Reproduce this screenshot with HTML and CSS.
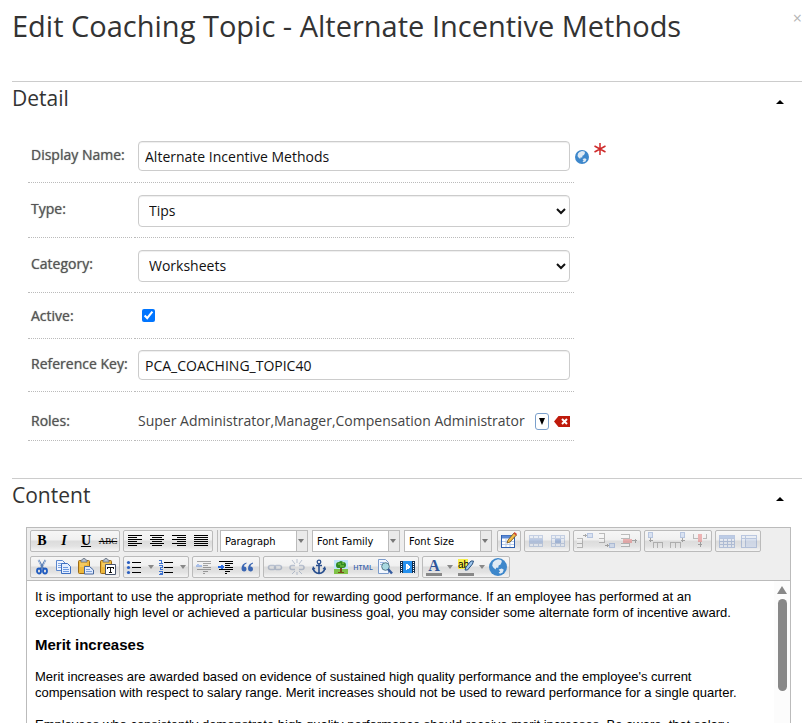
FILE: index.html
```html
<!DOCTYPE html>
<html lang="en">
<head>
<meta charset="utf-8">
<title>Edit Coaching Topic</title>
<link rel="stylesheet" href="styles.css">
</head>
<body>
<svg class="defs" aria-hidden="true">
  <symbol id="globe" viewBox="0 0 14 14"><circle cx="7" cy="7" r="7" fill="#3d87cb"/><path d="M4.500 2 7 1l2.500.5.5 1.500L9 5 7.500 5.800 7.200 7.500 5.500 7.500 5.200 9 3.500 7.500 2.500 6l.5-2.500zM7.500 9l2.500-.8 1.500 1-1 2.300-2 .8-1-1 1.200-.8z" fill="#dfeaf4"/></symbol>
  <symbol id="clip" viewBox="0 0 22 20"><rect x="3.500" y="3.500" width="11" height="13" rx="1" fill="#eeb83c" stroke="#9b6a16"/><path d="M6 5V3h1.500l.5-1.500h2l.5 1.500H12v2z" fill="#b9c3d2" stroke="#5f6875" stroke-width=".7"/><path d="M5 7h7M5 9h4" stroke="#f9da83"/></symbol>
</svg>
<main class="page">
  <header class="head">
    <h1>Edit Coaching Topic - Alternate Incentive Methods</h1>
    <button class="close" type="button" aria-label="Close">×</button>
  </header>

  <section class="panel">
    <div class="panel-head"><h2>Detail</h2><button class="fold" type="button" aria-label="Collapse detail"></button></div>
    <form class="form">
      <div class="row r-input">
        <label for="name">Display Name:</label>
        <div class="field"><input class="box" id="name" type="text" value="Alternate Incentive Methods">
          <svg class="globe" width="14" height="14"><use href="#globe"/></svg>
          <svg class="star" width="12" height="14" viewBox="0 0 12 14"><path d="M6 1v12M.5 4l11 6M11.500 4l-11 6" stroke="#cf2b2b" stroke-width="1.500"/></svg></div>
      </div>
      <div class="row r-select">
        <label for="type">Type:</label>
        <div class="field"><select class="box" id="type"><option>Tips</option></select></div>
      </div>
      <div class="row r-select">
        <label for="cat">Category:</label>
        <div class="field"><select class="box" id="cat"><option>Worksheets</option></select></div>
      </div>
      <div class="row r-check">
        <label for="active">Active:</label>
        <div class="field"><input class="check" id="active" type="checkbox" checked></div>
      </div>
      <div class="row r-input">
        <label for="key">Reference Key:</label>
        <div class="field"><input class="box" id="key" type="text" value="PCA_COACHING_TOPIC40"></div>
      </div>
      <div class="row r-roles">
        <label for="pick">Roles:</label>
        <div class="field roles"><span>Super Administrator,Manager,Compensation Administrator</span>
          <button class="pick" id="pick" type="button" aria-label="Choose roles"><svg width="6" height="7" viewBox="0 0 6 7"><path d="M0 0h6L3 7z"/></svg></button>
          <button class="clear" type="button" aria-label="Clear roles"><svg width="16" height="11" viewBox="0 0 16 11"><path d="M0 5.500 4.500 0H16v11H4.500z" fill="#bf1a0b"/><path d="m8 3 5 5m0-5-5 5" stroke="#fff" stroke-width="2"/></svg></button></div>
      </div>
    </form>
  </section>

  <section class="panel content">
    <div class="panel-head"><h2>Content</h2><button class="fold" type="button" aria-label="Collapse content"></button></div>
    <div class="editor">
      <div class="toolbar">
        <div class="tools">
          <div class="group">
            <button type="button" class="t-bold">B</button><button type="button" class="t-bold t-italic">I</button><button type="button" class="t-bold t-under">U</button><button type="button" class="t-strike">ABC</button>
          </div>
          <div class="group">
            <button type="button" aria-label="Align left"><svg class="px" viewBox="0 0 22 20"><path d="M4 4.500h14M4 6.500h9M4 8.500h14M4 10.500h9M4 12.500h14M4 14.500h9" stroke="#000"/></svg></button>
            <button type="button" aria-label="Align center"><svg class="px" viewBox="0 0 22 20"><path d="M4 4.500h14M6 6.500h10M4 8.500h14M6 10.500h10M4 12.500h14M6 14.500h10" stroke="#000"/></svg></button>
            <button type="button" aria-label="Align right"><svg class="px" viewBox="0 0 22 20"><path d="M4 4.500h14M9 6.500h9M4 8.500h14M9 10.500h9M4 12.500h14M9 14.500h9" stroke="#000"/></svg></button>
            <button type="button" aria-label="Justify"><svg class="px" viewBox="0 0 22 20"><path d="M4 4.500h14M4 6.500h14M4 8.500h14M4 10.500h14M4 12.500h14M4 14.500h14" stroke="#000"/></svg></button>
          </div>
          <div class="lists">
            <span class="drop"><select aria-label="Format"><option>Paragraph</option></select></span>
            <span class="drop"><select aria-label="Font family"><option>Font Family</option></select></span>
            <span class="drop"><select aria-label="Font size"><option>Font Size</option></select></span>
          </div>
          <div class="group">
            <button type="button" aria-label="Table"><svg viewBox="0 0 22 20"><rect x="3.500" y="4.500" width="13" height="12" fill="#fff" stroke="#2f5fae"/><path d="M4 6h12" stroke="#5b8ad6" stroke-width="3"/><path d="M4 10.500h12M4 13.500h12M8 8v8M12 8v8" stroke="#b7cbe8"/><path d="m9 12 1-3 6-7 2.500 2L12 11z" fill="#f1bd4a" stroke="#6d4b16" stroke-width=".8"/><path d="m15.500 2.500 1-1.500 2.500 2-1 1.500z" fill="#d34a34"/></svg></button>
          </div>
          <div class="group off">
            <button type="button" disabled aria-label="Row properties"><svg class="px" viewBox="0 0 22 20"><path d="M4.500 4.500h13v11h-13zM4 7.500h14M4 12.500h14M8.500 4v11M13.500 4v11" fill="#dce7fa" stroke="#6f8fc6"/><path d="M4 8h14v4H4z" fill="#5b86d0"/></svg></button>
            <button type="button" disabled aria-label="Cell properties"><svg class="px" viewBox="0 0 22 20"><path d="M4.500 4.500h13v11h-13zM4 7.500h14M4 12.500h14M8.500 4v11M13.500 4v11" fill="#dce7fa" stroke="#6f8fc6"/><path d="M8 8h6v4H8z" fill="#2f65c0"/></svg></button>
          </div>
          <div class="group off">
            <button type="button" disabled aria-label="Row before"><svg class="px" viewBox="0 0 22 20"><path d="M3 7.500h5.500v9H3M3 12h6" fill="#fff" stroke="#555"/><path d="M13.500 2.500h5v4h-5z" fill="#a9c2ee" stroke="#4a73be"/><path d="M9 4.500h4M11 3v3" stroke="#222"/></svg></button>
            <button type="button" disabled aria-label="Row after"><svg class="px" viewBox="0 0 22 20"><path d="M3 2.500h5.500v9H3M3 7h6" fill="#fff" stroke="#555"/><path d="M13.500 12.500h5v4h-5z" fill="#a9c2ee" stroke="#4a73be"/><path d="M9 14.500h4M11 13v3" stroke="#222"/></svg></button>
            <button type="button" disabled aria-label="Delete row"><svg class="px" viewBox="0 0 22 20"><path d="M3 3.500h8.500v4H3M3 12.500h8.500v3H3" fill="#fff" stroke="#555"/><path d="M5 8h9v4H5z" fill="#e24040"/><path d="M14 9.500h5M17 8v4" stroke="#222"/></svg></button>
          </div>
          <div class="group off">
            <button type="button" disabled aria-label="Column before"><svg class="px" viewBox="0 0 22 20"><path d="M8 17v-5.500h9.500V17M12.500 12v5" fill="none" stroke="#555"/><path d="M3.500 1.500h4v5h-4z" fill="#a9c2ee" stroke="#4a73be"/><path d="M5.500 7v4M4 9.500h4" stroke="#222"/></svg></button>
            <button type="button" disabled aria-label="Column after"><svg class="px" viewBox="0 0 22 20"><path d="M3.500 17v-5.500H13V17M8.500 12v5" fill="none" stroke="#555"/><path d="M13.500 1.500h4v5h-4z" fill="#a9c2ee" stroke="#4a73be"/><path d="M15.500 7v4M14 9.500h4" stroke="#222"/></svg></button>
            <button type="button" disabled aria-label="Delete column"><svg class="px" viewBox="0 0 22 20"><path d="M4.500 3v4h4M17.500 3v4h-4" fill="none" stroke="#555"/><path d="M9 3h4v8H9z" fill="#e24040"/><path d="M11.500 11v5M9 13.500h4" stroke="#222"/></svg></button>
          </div>
          <div class="group off">
            <button type="button" disabled aria-label="Split cells"><svg class="px" viewBox="0 0 22 20"><path d="M3.500 4.500h15v12h-15zM3 7.500h16M3 10.500h16M3 13.500h16M7.500 7v10M11.500 7v10M15.500 7v10" fill="#dce7fa" stroke="#5278bd"/><path d="M4 5h14v2H4z" fill="#5b86d0"/></svg></button>
            <button type="button" disabled aria-label="Merge cells"><svg class="px" viewBox="0 0 22 20"><path d="M3.500 4.500h15v12h-15zM3 7.500h16M7.500 4v12" fill="#dce7fa" stroke="#5278bd"/><path d="M8 8h10v8H8z" fill="#b4caf2"/></svg></button>
          </div>
        </div>

        <div class="tools">
          <div class="group">
            <button type="button" aria-label="Cut"><svg viewBox="0 0 22 20"><path d="m7.500 3 5 9M14.500 3l-5 9" stroke="#5b7fb5" stroke-width="1.800"/><path d="m7.500 3 2 5M14.500 3l-2 5" stroke="#b9cbe4"/><ellipse cx="8" cy="14" rx="2" ry="2.500" fill="none" stroke="#1f5bc0" stroke-width="1.800"/><ellipse cx="14" cy="14" rx="2" ry="2.500" fill="none" stroke="#1f5bc0" stroke-width="1.800"/></svg></button>
            <button type="button" aria-label="Copy"><svg viewBox="0 0 22 20"><path d="M3.500 3.500h6l3 3v7h-9z" fill="#eef4ff" stroke="#5a86cd"/><path d="M5 6.500h4M5 8.500h4M5 10.500h3" stroke="#80a6e2"/><path d="M8.500 6.500h6l3 3v7h-9z" fill="#e2edff" stroke="#3c6ec0"/><path d="M10 10.500h5M10 12.500h6M10 14.500h6" stroke="#6d99df"/></svg></button>
            <button type="button" aria-label="Paste"><svg viewBox="0 0 22 20"><use href="#clip"/><path d="M9.500 9.500h5l4 3.500v4h-9z" fill="#dfeaff" stroke="#47679c"/><path d="M11 12.500h4M11 14.500h6" stroke="#7ea1d8"/></svg></button>
            <button type="button" aria-label="Paste as text"><svg viewBox="0 0 22 20"><use href="#clip"/><path d="M8.500 7.500h10v10h-10z" fill="#fff" stroke="#47536b"/><path d="M10 10.500h7M13.500 10v6M12 15.500h3M10.500 10v2M16.500 10v2" stroke="#111"/></svg></button>
          </div>
          <div class="group">
            <button type="button" aria-label="Bulleted list"><svg viewBox="0 0 22 20"><path d="M8 5.500h9M8 10.500h9M8 15.500h9" stroke="#000"/><g fill="#2b5fc0"><circle cx="4.500" cy="5.500" r="1.600"/><circle cx="4.500" cy="10.500" r="1.600"/><circle cx="4.500" cy="15.500" r="1.600"/></g></svg></button><button type="button" class="more" aria-label="Bullet styles"></button>
            <button type="button" aria-label="Numbered list"><svg class="px" viewBox="0 0 22 20"><path d="M8 5.500h9M8 10.500h9M8 15.500h9" stroke="#000"/><path d="M3 3.500h2V7M3 6.500h4M3 8.500h3v2H4v2h3M3 14.500h3v3H3M4 16.500h2" fill="none" stroke="#3d72d0"/></svg></button><button type="button" class="more" aria-label="Number styles"></button>
          </div>
          <div class="group">
            <button type="button" disabled class="off" aria-label="Outdent"><svg class="px" viewBox="0 0 22 20"><path d="M4 4.500h14M10 6.500h8M10 8.500h5M10 10.500h8M4 12.500h14M10 14.500h5M10 16.500h2" stroke="#111"/><path d="M3 8.500h6M5 7v3" stroke="#2a6be0" stroke-width="2"/></svg></button>
            <button type="button" aria-label="Indent"><svg class="px" viewBox="0 0 22 20"><path d="M4 4.500h14M10 6.500h8M10 8.500h5M10 10.500h8M4 12.500h14M10 14.500h5M10 16.500h2" stroke="#000"/><path d="M3 9.500h6M7 7.500v4" stroke="#2a6be0" stroke-width="2"/></svg></button>
            <button type="button" aria-label="Quote"><svg viewBox="0 0 22 20"><path d="M9.500 5.500C6 6.500 4.500 8.500 4.500 12a2.500 2.500 0 1 0 2.300-2.600Q7 7.500 9.500 6.500zM16 5.500c-3.500 1-5 3-5 6.500a2.500 2.500 0 1 0 2.300-2.600q.2-1.900 2.700-2.900z" fill="#3a66b3"/></svg></button>
          </div>
          <div class="group">
            <button type="button" disabled class="off" aria-label="Link"><svg viewBox="0 0 22 20"><rect x="4.500" y="8.500" width="7" height="4" rx="2" fill="none" stroke="#526a94" stroke-width="1.500"/><rect x="10.500" y="8.500" width="7" height="4" rx="2" fill="none" stroke="#526a94" stroke-width="1.500"/></svg></button>
            <button type="button" disabled class="off" aria-label="Unlink"><svg viewBox="0 0 22 20"><path d="M9 8.500H6a2 2 0 0 0 0 4h3M13 8.500h3a2 2 0 0 1 0 4h-3" fill="none" stroke="#526a94" stroke-width="1.500"/><path d="m6 3 3 4m2-5v4m5-3-3 4M6 17l3-3m2 1v3m5-1-3-3" stroke="#526a94"/></svg></button>
            <button type="button" aria-label="Anchor"><svg viewBox="0 0 22 20"><circle cx="11" cy="5" r="1.800" fill="none" stroke="#294f8f" stroke-width="1.300"/><path d="M11 7v9M8 8.500h6M5 11q1 5 6 5.500 5-.5 6-5.500" fill="none" stroke="#294f8f" stroke-width="1.600"/><path d="m4 13 1-4 2.500 3zM18 13l-1-4-2.500 3z" fill="#294f8f"/></svg></button>
            <button type="button" aria-label="Image"><svg viewBox="0 0 22 20"><path d="M4 3h14v10H4z" fill="#bfe3fa"/><path d="M4 12h14v5H4z" fill="#7fc247"/><path d="M10 10h2v5h2v1H8v-1h2z" fill="#7a4b1d"/><path d="M6 8q0-3 3-3 2-2 4 0 3 0 3 3 0 3-3 3H8Q6 11 6 8z" fill="#2f8a22"/><path d="M8 7h3M12 6h2M10 9h4" stroke="#8bd04d"/></svg></button>
            <button type="button" class="t-html">HTML</button>
            <button type="button" aria-label="Preview"><svg viewBox="0 0 22 20"><path d="M4.500 2.500h7l3 3v11h-10z" fill="#f2f7ff" stroke="#7b9bcb"/><path d="M6 5.500h4M6 7.500h3" stroke="#9bb8e5"/><circle cx="11.500" cy="9.500" r="3.800" fill="#a8d9e2" stroke="#547887"/><path d="m14 12 4 4.500" stroke="#355ca0" stroke-width="2.500"/></svg></button>
            <button type="button" aria-label="Media"><svg class="px" viewBox="0 0 22 20"><path d="M4 4h15v12H4z" fill="#15304f"/><path d="M7 4h9v12H7z" fill="#2590ee"/><path d="M5.500 5v11M17.500 5v11" stroke="#fff" stroke-dasharray="1 1"/><path d="m10 7 4 3-4 3z" fill="#cfe8ff" stroke="#fff"/></svg></button>
          </div>
          <div class="group">
            <button type="button" class="t-color"><span>A</span></button><button type="button" class="more" aria-label="Text colours"></button>
            <button type="button" class="t-mark"><span>ab</span><svg viewBox="0 0 22 20"><path d="m10 13 1-3 5-6h2.500l-1 3-5 6z" fill="#9ec7ef" stroke="#27507f"/></svg></button><button type="button" class="more" aria-label="Highlight colours"></button>
            <button type="button" aria-label="Translate"><svg viewBox="0 0 22 20"><use href="#globe" x="2" y="1" width="18" height="18"/></svg></button>
          </div>
        </div>
      </div>
      <div class="doc">
        <div class="text">
          <p>It is important to use the appropriate method for rewarding good performance. If an employee has performed at an exceptionally high level or achieved a particular business goal, you may consider some alternate form of incentive award.</p>
          <h3>Merit increases</h3>
          <p>Merit increases are awarded based on evidence of sustained high quality performance and the employee's current compensation with respect to salary range. Merit increases should not be used to reward performance for a single quarter.</p>
          <p>Employees who consistently demonstrate high quality performance should receive merit increases. Be aware, that salary</p>
        </div>
        <div class="scroll" aria-hidden="true"><i class="up"></i><i class="thumb"></i></div>
      </div>
    </div>
  </section>
</main>
</body>
</html>
```
FILE: styles.css
```css
* { box-sizing: border-box; }
body { margin: 0; background: #fff; color: #333; font-family: "Open Sans", sans-serif; font-size: 14px; }
button { padding: 0; border: 0; background: none; font: inherit; }
h1, h2, h3, p { margin: 0; }
.defs { display: none; }

.page { display: flex; flex-direction: column; height: 100vh; overflow: hidden; padding: 0 3px 0 12px; }
.head { display: flex; justify-content: space-between; align-items: flex-start; padding: 6px 0 35px; }
h1 { font-size: 29px; line-height: 40px; font-weight: 400; }
.close { color: #b5b5b5; font-size: 16px; line-height: 24px; }

.panel { border-top: 1px solid #ccc; }
.panel-head { display: flex; justify-content: space-between; align-items: center; padding-right: 18px; margin-bottom: 16px; }
h2 { font-size: 21px; line-height: 32px; font-weight: 400; }
.fold { margin-top: 8px; border: 4px solid transparent; border-top: 0; border-bottom-color: #000; }

.form { max-width: 546px; margin: 0 0 37px 16px; }
.row { display: grid; grid-template-columns: 104px minmax(0, 1fr); gap: 2px; }
.row > * { display: flex; align-items: center; border-bottom: 1px dotted #bbb; }
.row label { padding: 0 0 4px 3px; color: #555; text-shadow: 0 0 1px #777; white-space: nowrap; }
.field { gap: 5px; padding: 0 4px; }
.r-input { height: 53px; }
.r-select { height: 55px; }
.r-check { height: 46px; }
.r-roles { height: 49px; }
.r-check label { padding-bottom: 0; }
.r-select .field { padding-top: 2px; }
.r-roles label, .r-roles .field { padding-top: 8px; padding-bottom: 0; }
.box { flex: 0 0 100%; min-width: 0; height: 30px; padding: 0 6px; border: 1px solid #ccc; border-radius: 4px; background: #fff; color: #111; font: inherit; box-shadow: inset 0 1px 1px #eee; }
select.box { height: 32px; padding: 0 6px 2px; }
.globe, .star { flex: none; }
.globe { margin-top: 2px; }
.star { margin-bottom: 14px; }
.check { width: 13px; height: 13px; margin: 0 4px; }
.roles { color: #444; white-space: nowrap; }
.roles span { flex: 1; }
.pick { display: flex; align-items: center; justify-content: center; width: 14px; height: 17px; margin-top: 2px; border: 1px solid #7ba0cc; border-radius: 3px; }
.clear { display: flex; margin-top: 2px; }

.content { display: flex; flex-direction: column; flex: 1; min-height: 0; }
.editor { display: flex; flex-direction: column; flex: 1; min-height: 0; margin: 0 11px 0 14px; border: 1px solid #bbb; border-bottom: 0; }
.toolbar { display: flex; flex-direction: column; gap: 4px; padding: 2px 3px; background: #eee; border-bottom: 1px solid #bbb; }
.tools { display: flex; gap: 3px; }
.group { display: flex; height: 22px; border: 1px solid #bbb; border-radius: 2px; background: linear-gradient(#f6f6f6, #f0f0f0 45%, #dcdcdc 50%, #e2e2e2 75%, #f4f4f4); }
.group button { display: flex; align-items: center; justify-content: center; width: 22px; height: 20px; color: #000; }
.group svg { display: block; width: 22px; height: 20px; }
.px { shape-rendering: crispEdges; }
.group.off svg, .group .off svg { opacity: .35; }
.group .more { width: 10px; }
.more::after { content: ""; border: 3px solid transparent; border-top: 4px solid #888; border-bottom: 0; }
.group .t-bold { font: bold 14px "Liberation Serif", serif; }
.group .t-italic { font-style: italic; }
.group .t-under { text-decoration: underline; }
.group .t-strike { font: 9px "Liberation Serif", serif; text-decoration: line-through; }
.group .t-html { font: 600 7px "Open Sans", sans-serif; color: #3a63ad; }
.t-color span { width: 16px; height: 17px; border-bottom: 3px solid #888; font: bold 16px/14px "Liberation Serif", serif; color: #2f559a; }
.group .t-mark { position: relative; }
.t-mark span { width: 16px; height: 17px; border-bottom: 3px solid #888; font: 10px/11px "Liberation Sans", sans-serif; text-align: left; background: linear-gradient(90deg, #f7f04a 10px, transparent 10px) 0 0 / 100% 10px no-repeat; }
.t-mark svg { position: absolute; inset: 0; }

.lists { display: flex; gap: 4px; margin-left: 1px; padding: 0 2px; border-left: 1px solid #bbb; }
.drop { position: relative; display: flex; width: 88px; height: 22px; border: 1px solid #bbb; background: linear-gradient(90deg, #fff 75px, #bbb 75px, #bbb 76px, #eaeaea 76px); }
.drop select { width: 100%; padding: 0 0 0 4px; border: 0; appearance: none; background: none; color: #000; font: 11px "DejaVu Sans Condensed", sans-serif; }
.drop::after { content: ""; position: absolute; right: 3px; top: 8px; border: 3px solid transparent; border-top: 4px solid #777; border-bottom: 0; }

.doc { display: flex; flex: 1; min-height: 0; overflow: hidden; background: #fff; }
.text { flex: 1; padding: 8px 20px 0 8px; color: #000; font: 13px/16px "Liberation Sans", Arial, sans-serif; }
.text p { margin-bottom: 16px; }
.text h3 { margin-bottom: 16px; font-size: 15px; line-height: 16px; }
.scroll { display: flex; flex-direction: column; align-items: center; gap: 5px; width: 16px; padding-top: 5px; background: #fcfcfc; }
.up { border: 5px solid transparent; border-top: 0; border-bottom: 8px solid #888; }
.thumb { width: 9px; height: 92px; border-radius: 5px; background: #888; }
```
